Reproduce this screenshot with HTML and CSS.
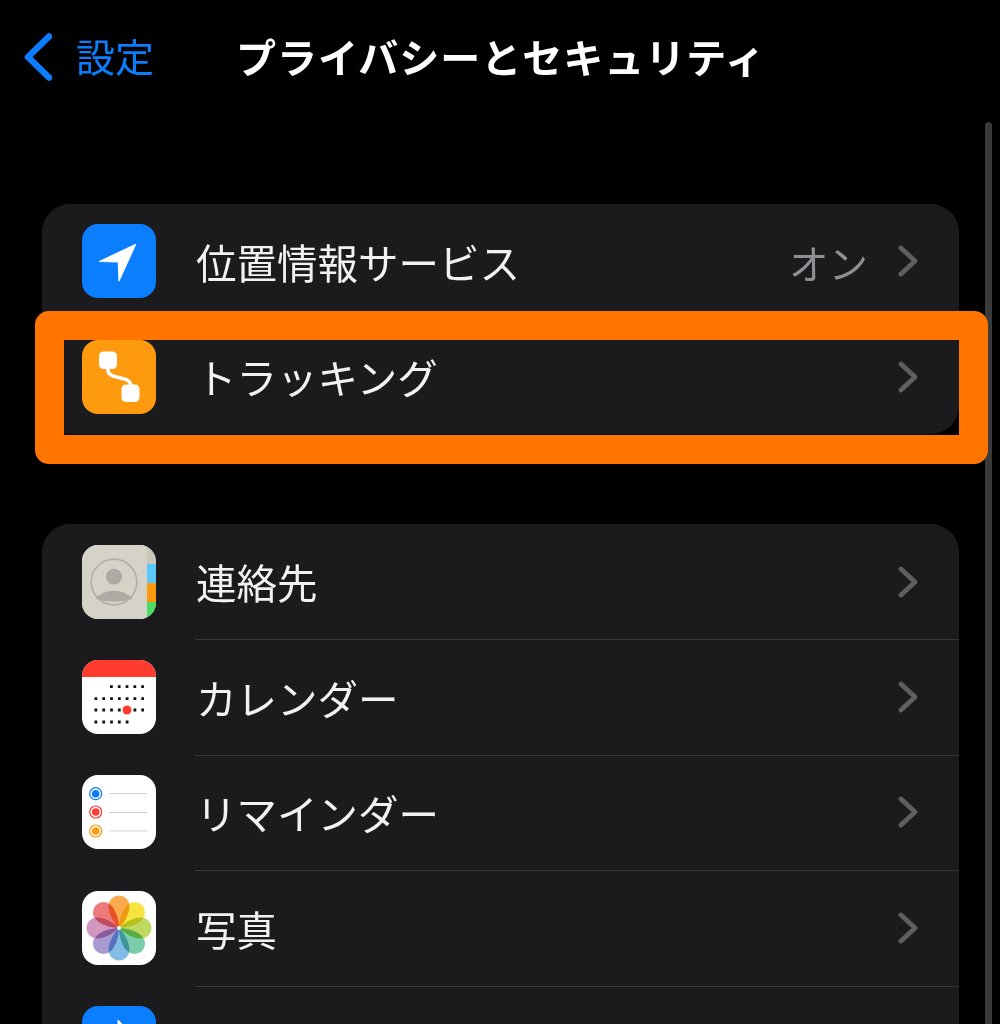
FILE: index.html
```html
<!DOCTYPE html>
<html lang="ja">
<head>
    <meta charset="UTF-8">
    <meta name="viewport" content="width=device-width, initial-scale=1.0">
    <title>プライバシーとセキュリティ</title>
    <link rel="stylesheet" href="styles.css">
</head>
<body>
    <div class="header">
        <a class="back" href="#">
            <svg class="back-icon" viewBox="0 0 28 48"><path d="M25 3.500 4 24l21 20.500"/></svg>
            <span>設定</span>
        </a>
        <div class="title">プライバシーとセキュリティ</div>
    </div>

    <div class="scrollbar"></div>

    <div class="card">
        <div class="row">
            <svg class="icon" viewBox="0 0 74 74">
                <rect width="74" height="74" rx="16" fill="#0a7eff"/>
                <path d="M53.500 20.500 36.300 38 17.500 37.500ZM53.500 20.500 37 56.800 36.300 38Z" fill="#fff" stroke="#fff" stroke-width="1.200" stroke-linejoin="round"/>
            </svg>
            <span class="label">位置情報サービス</span>
            <span class="value">オン</span>
            <svg class="chevron" viewBox="0 0 20 32"><path d="M3 3l14 13L3 29"/></svg>
        </div>
        <div class="row">
            <svg class="icon" viewBox="0 0 74 74">
                <rect width="74" height="74" rx="16" fill="#ff9a0e"/>
                <path d="M25.500 28c0 5 3 7.500 7 8.500l8 2c5 1 8 3 8.500 7" fill="none" stroke="#fff" stroke-width="3.500"/>
                <rect x="17" y="11.500" width="18" height="17.500" rx="4.500" fill="#fff"/>
                <rect x="39.500" y="44.500" width="18" height="17.500" rx="4.500" fill="#fff"/>
            </svg>
            <span class="label">トラッキング</span>
            <svg class="chevron" viewBox="0 0 20 32"><path d="M3 3l14 13L3 29"/></svg>
        </div>
    </div>

    <div class="highlight"></div>

    <div class="card card-apps">
        <div class="row">
            <svg class="icon" viewBox="0 0 74 74">
                <defs>
                    <clipPath id="contact-shape"><rect width="74" height="74" rx="16"/></clipPath>
                </defs>
                <g clip-path="url(#contact-shape)">
                    <rect width="74" height="74" fill="#c9c6bc"/>
                    <rect x="65" y="19" width="9" height="19" fill="#5ac8fa"/>
                    <rect x="65" y="38" width="9" height="19" fill="#ff9a0e"/>
                    <rect x="65" y="57" width="9" height="17" fill="#4cd964"/>
                    <rect width="65" height="74" fill="#d5d2c8"/>
                </g>
                <circle cx="32" cy="37" r="22.800" fill="none" stroke="#b5b0a7" stroke-width="1.700"/>
                <circle cx="32" cy="31.700" r="8" fill="#aea9a2"/>
                <path d="M13.700 53.500C18 48.500 25 45.700 32 45.700S46 48.500 50.300 53.500C46 55.500 39 56.500 32 56.500S18 55.500 13.700 53.500Z" fill="#aea9a2"/>
            </svg>
            <span class="label">連絡先</span>
            <svg class="chevron" viewBox="0 0 20 32"><path d="M3 3l14 13L3 29"/></svg>
        </div>
        <div class="row">
            <svg class="icon" viewBox="0 0 74 74">
                <defs><clipPath id="cal-shape"><rect width="74" height="74" rx="16"/></clipPath></defs>
                <g clip-path="url(#cal-shape)">
                    <rect width="74" height="74" fill="#fff"/>
                    <rect width="74" height="17" fill="#ff3b30"/>
                </g>
                <g class="cal-dots">
                    <path d="M28 26.700H62"/>
                    <path d="M12.500 38.700H62"/>
                    <path d="M12.500 50H62"/>
                    <path d="M12.500 62H47"/>
                </g>
                <circle cx="45" cy="50" r="4.500" fill="#ff3b30"/>
            </svg>
            <span class="label">カレンダー</span>
            <svg class="chevron" viewBox="0 0 20 32"><path d="M3 3l14 13L3 29"/></svg>
        </div>
        <div class="row">
            <svg class="icon" viewBox="0 0 74 74">
                <rect width="74" height="74" rx="16" fill="#fff"/>
                <g fill="none" stroke-width="1.200">
                    <circle cx="13.700" cy="18.700" r="6" stroke="#0a7eff"/>
                    <circle cx="13.700" cy="37" r="6" stroke="#ff3b30"/>
                    <circle cx="13.700" cy="56" r="6" stroke="#ff9a0e"/>
                    <path d="M27 18.500H65M27 37.500H65M27 56H65" stroke="#d2d2d2"/>
                </g>
                <circle cx="13.700" cy="18.700" r="3.800" fill="#0a7eff"/>
                <circle cx="13.700" cy="37" r="3.800" fill="#ff3b30"/>
                <circle cx="13.700" cy="56" r="3.800" fill="#ff9a0e"/>
            </svg>
            <span class="label">リマインダー</span>
            <svg class="chevron" viewBox="0 0 20 32"><path d="M3 3l14 13L3 29"/></svg>
        </div>
        <div class="row">
            <svg class="icon" viewBox="0 0 74 74">
                <defs>
                    <path id="petal" d="M37 37C33 33 26.500 24 26.500 15A10.500 10.500 0 0 1 47.500 15C47.500 24 41 33 37 37Z"/>
                </defs>
                <rect width="74" height="74" rx="16" fill="#fff"/>
                <g class="petals">
                    <use href="#petal" fill="#f8a23a"/>
                    <use href="#petal" fill="#f6e12c" transform="rotate(45 37 37)"/>
                    <use href="#petal" fill="#b7d450" transform="rotate(90 37 37)"/>
                    <use href="#petal" fill="#6cc8a2" transform="rotate(135 37 37)"/>
                    <use href="#petal" fill="#74b4e4" transform="rotate(180 37 37)"/>
                    <use href="#petal" fill="#a090cc" transform="rotate(225 37 37)"/>
                    <use href="#petal" fill="#cc8cba" transform="rotate(270 37 37)"/>
                    <use href="#petal" fill="#ec6c6c" transform="rotate(315 37 37)"/>
                </g>
                <circle cx="37" cy="37" r="2" fill="#fff"/>
            </svg>
            <span class="label">写真</span>
            <svg class="chevron" viewBox="0 0 20 32"><path d="M3 3l14 13L3 29"/></svg>
        </div>
        <div class="row">
            <svg class="icon" viewBox="0 0 74 74">
                <rect width="74" height="74" rx="16" fill="#0a7eff"/>
                <path d="M36 14 53 31 36 48Z" fill="#fff" stroke="#fff" stroke-linejoin="round"/>
            </svg>
        </div>
    </div>
</body>
</html>
```

FILE: styles.css
```css
* {
    margin: 0px;
    padding: 0px;
    box-sizing: border-box;
}
html, body{
    height: 1024px;
    overflow: hidden;
}
body{
    position: relative;
    background: #000;
    color: #fff;
    font-family: "Noto Sans CJK JP", "Liberation Sans", sans-serif;
}
.header{
    display: flex;
    align-items: center;
    height: 113.600px;
    padding-left: 24px;
}
.back{
    display: flex;
    align-items: center;
    gap: 24px;
    width: 212px;
    color: #0a7eff;
    font-size: 39px;
    line-height: 48px;
    text-decoration: none;
}
.back span{
    margin-top: -4px;
}
.back-icon{
    width: 28px;
    height: 48px;
    fill: none;
    stroke: #0a7eff;
    stroke-width: 6.500;
    stroke-linecap: round;
    stroke-linejoin: round;
}
.title{
    margin-top: -2px;
    font-size: 40px;
    font-weight: 700;
    letter-spacing: 1px;
}
.scrollbar{
    position: absolute;
    top: 122px;
    left: 985px;
    width: 7px;
    height: 902px;
    border-radius: 4px 4px 0 0;
    background: #3a3a3a;
}
.card{
    width: 917px;
    margin: 90px 0 0 42px;
    border-radius: 28px;
    background: #1b1b1d;
    overflow: hidden;
}
.card-apps{
    height: 500px;
    margin-top: 89.600px;
    border-radius: 28px 28px 0 0;
}
.row{
    position: relative;
    display: flex;
    align-items: center;
    height: 115.400px;
    padding: 0 41px 0 40px;
    font-size: 40.500px;
}
.row + .row::before{
    content: "";
    position: absolute;
    top: 0;
    left: 153px;
    right: 0;
    height: 1px;
    background: #38383a;
}
.icon{
    width: 74px;
    height: 74px;
    flex: none;
    margin-right: 40px;
}
.label{
    flex: 1;
    padding-top: 2px;
    font-weight: 400;
    line-height: 1;
    color: #f2f2f4;
}
.value{
    margin-right: 30px;
    padding-top: 1px;
    color: #8e8e93;
    font-size: 39.500px;
    line-height: 1;
}
.chevron{
    width: 20px;
    height: 32px;
    flex: none;
    fill: none;
    stroke: #5f5f63;
    stroke-width: 4.800;
    stroke-linecap: round;
    stroke-linejoin: round;
}
.cal-dots path{
    fill: none;
    stroke: #111;
    stroke-width: 2.800;
    stroke-dasharray: 2.800 5;
}
.petals use{
    mix-blend-mode: multiply;
    opacity: 0.9;
}
.highlight{
    position: absolute;
    top: 311px;
    left: 35px;
    width: 953px;
    height: 153px;
    border: 29px solid #ff7500;
    border-radius: 14px;
}
```
